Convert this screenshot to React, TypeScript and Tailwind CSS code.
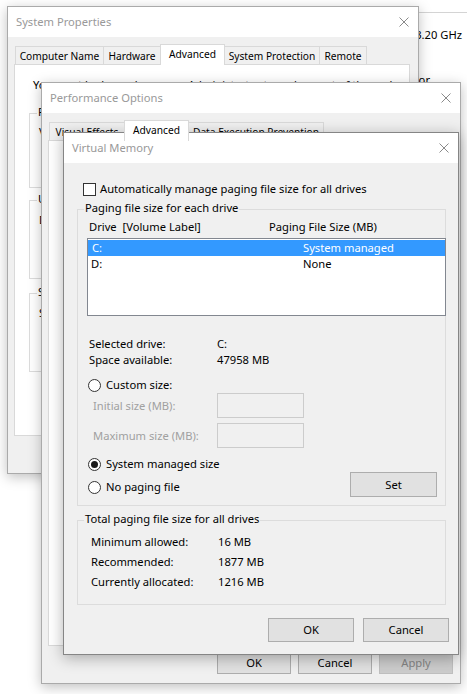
import React from 'react';

function CloseX() {
    return (
        <svg width="10" height="10" viewBox="0 0 10 10" className="shrink-0">
            <path d="M0.5 0.5L9.5 9.5M9.5 0.5L0.5 9.5" stroke="#8a8a8a" strokeWidth="1" fill="none" />
        </svg>
    );
}

function TitleBar({ title }: { title: string }) {
    return (
        <div className="flex h-[30px] shrink-0 items-center justify-between bg-white pl-[8px] pr-[9px]">
            <span className="text-[#999999]">{title}</span>
            <CloseX />
        </div>
    );
}

function Tab({ label, width, selected, first }: { label: string; width: string; selected?: boolean; first?: boolean }) {
    return (
        <div
            className={`flex items-center justify-center whitespace-nowrap border border-b-0 border-[#d9d9d9] text-[10.2px] ${width} ${first ? '' : '-ml-px'} ${
                selected ? 'relative z-10 mb-[-1px] h-[21px] bg-white pb-[2px]' : 'h-[18px] bg-[#f0f0f0]'
            }`}
        >
            {label}
        </div>
    );
}

function Button({ label, width, height, disabled }: { label: string; width: string; height: string; disabled?: boolean }) {
    return (
        <div
            className={`flex items-center justify-center border ${width} ${height} ${
                disabled ? 'border-[#bfbfbf] bg-[#cccccc] text-[#838383]' : 'border-[#adadad] bg-[#e1e1e1]'
            }`}
        >
            {label}
        </div>
    );
}

function Radio({ checked }: { checked?: boolean }) {
    return (
        <span className="flex h-[13px] w-[13px] shrink-0 items-center justify-center rounded-full border border-[#333333] bg-white">
            {checked && <span className="h-[7px] w-[7px] rounded-full bg-[#1a1a1a]" />}
        </span>
    );
}

function GroupLabel({ text }: { text: string }) {
    return <span className="absolute -top-[10px] left-[6px] bg-[#f0f0f0] px-[1px] leading-[16px]">{text}</span>;
}

function SystemProperties() {
    return (
        <div className="absolute left-[7px] top-[6px] flex h-[468px] w-[412px] flex-col border border-[#aaaaaa] bg-[#f0f0f0] shadow-[0_3px_12px_rgba(0,0,0,0.25)]">
            <TitleBar title="System Properties" />
            <div className="flex flex-col px-[6px] pt-[7px]">
                <div className="flex h-[20px] items-end pl-[1px]">
                    <Tab label="Computer Name" width="w-[89px]" first />
                    <Tab label="Hardware" width="w-[58px]" />
                    <Tab label="Advanced" width="w-[65px]" selected />
                    <Tab label="System Protection" width="w-[96px]" />
                    <Tab label="Remote" width="w-[48px]" />
                </div>
                <div className="flex h-[372px] w-[396px] flex-col border border-[#d9d9d9] bg-white pl-[14px] pt-[12px] leading-[16px]">
                    <div className="pl-[4px] whitespace-nowrap">You must be logged on as an Administrator to make most of these changes.</div>
                    <div className="relative mt-[20px] h-[75px] w-[365px] border border-[#dcdcdc] pl-[9px] pt-[10px]">
                        <span className="absolute -top-[10px] left-[7px] bg-white px-[1px]">Performance</span>
                        <div className="whitespace-nowrap">Visual effects, processor scheduling, memory usage, and virtual memory</div>
                    </div>
                    <div className="relative mt-[12px] h-[79px] w-[365px] border border-[#dcdcdc] pl-[9px] pt-[11px]">
                        <span className="absolute -top-[10px] left-[7px] bg-white px-[1px]">User Profiles</span>
                        <div className="whitespace-nowrap">Desktop settings related to your sign-in</div>
                    </div>
                    <div className="relative mt-[14px] h-[79px] w-[365px] border border-[#dcdcdc] pl-[9px] pt-[11px]">
                        <span className="absolute -top-[10px] left-[7px] bg-white px-[1px]">Startup and Recovery</span>
                        <div className="whitespace-nowrap">System startup, system failure, and debugging information</div>
                    </div>
                </div>
            </div>
        </div>
    );
}

function PerformanceOptions() {
    return (
        <div className="absolute left-[41px] top-[82px] flex h-[602px] w-[420px] flex-col border border-[#aaaaaa] bg-[#f0f0f0] shadow-[0_3px_12px_rgba(0,0,0,0.25)]">
            <TitleBar title="Performance Options" />
            <div className="flex flex-col px-[6px] pt-[7px]">
                <div className="flex h-[20px] items-end pl-[1px]">
                    <Tab label="Visual Effects" width="w-[76px]" first />
                    <Tab label="Advanced" width="w-[65px]" selected />
                    <Tab label="Data Execution Prevention" width="w-[136px]" />
                </div>
                <div className="h-[506px] w-[405px] border border-[#d9d9d9] bg-white" />
                <div className="mt-[5px] flex w-[405px] justify-end gap-[7px]">
                    <Button label="OK" width="w-[74px]" height="h-[23px]" />
                    <Button label="Cancel" width="w-[74px]" height="h-[23px]" />
                    <Button label="Apply" width="w-[74px]" height="h-[23px]" disabled />
                </div>
            </div>
        </div>
    );
}

function VirtualMemory() {
    return (
        <div className="absolute left-[63px] top-[132px] flex h-[523px] w-[396px] flex-col border border-[#858585] bg-[#f0f0f0] shadow-[0_3px_14px_rgba(0,0,0,0.3)]">
            <TitleBar title="Virtual Memory" />
            <div className="flex flex-col pl-[13px] pr-[9px] leading-[16px]">
                {/* Auto manage */}
                <div className="ml-[6px] mt-[18px] flex h-[16px] items-center gap-[4px]">
                    <span className="h-[13px] w-[13px] border border-[#333333] bg-white" />
                    <span>Automatically manage paging file size for all drives</span>
                </div>

                {/* Paging file size for each drive */}
                <div className="relative mt-[12px] flex h-[297px] w-[369px] flex-col border border-[#dcdcdc] pl-[11px]">
                    <GroupLabel text="Paging file size for each drive" />
                    <div className="mt-[9px] flex h-[16px]">
                        <span className="w-[180px] whitespace-pre">Drive  [Volume Label]</span>
                        <span>Paging File Size (MB)</span>
                    </div>
                    <div className="-ml-[2px] mt-[3px] h-[78px] w-[359px] border border-[#828790] bg-white pt-[1px]">
                        <div className="flex h-[16px] bg-[#3399ff] pl-[4px] text-white">
                            <span className="w-[211px]">C:</span>
                            <span>System managed</span>
                        </div>
                        <div className="flex h-[16px] pl-[3px]">
                            <span className="w-[212px]">D:</span>
                            <span>None</span>
                        </div>
                    </div>
                    <div className="mt-[20px] flex h-[16px]">
                        <span className="w-[128px]">Selected drive:</span>
                        <span>C:</span>
                    </div>
                    <div className="flex h-[16px]">
                        <span className="w-[128px]">Space available:</span>
                        <span>47958 MB</span>
                    </div>
                    <div className="-ml-px mt-[9px] flex h-[16px] items-center gap-[5px]">
                        <Radio />
                        <span>Custom size:</span>
                    </div>
                    <div className="flex items-center">
                        <span className="w-[128px] pl-[4px] text-[#a0a0a0]">Initial size (MB):</span>
                        <span className="h-[25px] w-[87px] border border-[#cccccc] bg-[#f0f0f0]" />
                    </div>
                    <div className="mt-[5px] flex items-center">
                        <span className="w-[128px] pl-[4px] text-[#a0a0a0]">Maximum size (MB):</span>
                        <span className="h-[25px] w-[87px] border border-[#cccccc] bg-[#f0f0f0]" />
                    </div>
                    <div className="mt-[8px] flex items-end justify-between">
                        <div className="-ml-px flex flex-col pb-[2px]">
                            <div className="flex h-[16px] items-center gap-[5px]">
                                <Radio checked />
                                <span>System managed size</span>
                            </div>
                            <div className="mt-[7px] flex h-[16px] items-center gap-[5px]">
                                <Radio />
                                <span>No paging file</span>
                            </div>
                        </div>
                        <div className="mr-[8px]">
                            <Button label="Set" width="w-[87px]" height="h-[25px]" />
                        </div>
                    </div>
                </div>

                {/* Totals */}
                <div className="relative mt-[14px] flex h-[85px] w-[369px] flex-col border border-[#dcdcdc] pl-[13px] pt-[11px] leading-[20px]">
                    <GroupLabel text="Total paging file size for all drives" />
                    <div className="flex">
                        <span className="w-[127px]">Minimum allowed:</span>
                        <span>16 MB</span>
                    </div>
                    <div className="flex">
                        <span className="w-[127px]">Recommended:</span>
                        <span>1877 MB</span>
                    </div>
                    <div className="flex">
                        <span className="w-[127px]">Currently allocated:</span>
                        <span>1216 MB</span>
                    </div>
                </div>

                <div className="mt-[13px] flex justify-end gap-[9px]">
                    <Button label="OK" width="w-[86px]" height="h-[24px]" />
                    <Button label="Cancel" width="w-[86px]" height="h-[24px]" />
                </div>
            </div>
        </div>
    );
}

export default function App() {
    return (
        <div className="relative h-[694px] w-[467px] overflow-hidden bg-white font-['Noto_Sans',sans-serif] text-[11.2px] leading-[16px] text-black">
            {/* System window behind the dialogs */}
            <div className="absolute left-[200px] top-[12px] flex h-[120px] w-[267px] flex-col items-end border-t border-[#d4d4d4] bg-white">
                <div className="pr-[5px] pt-[14px] whitespace-nowrap">CPU @ 3.20GHz   3.20 GHz</div>
                <div className="mt-[29px] pr-[37px] whitespace-nowrap">64-bit Operating System, x64-based processor</div>
            </div>
            <SystemProperties />
            <PerformanceOptions />
            <VirtualMemory />
        </div>
    );
}
